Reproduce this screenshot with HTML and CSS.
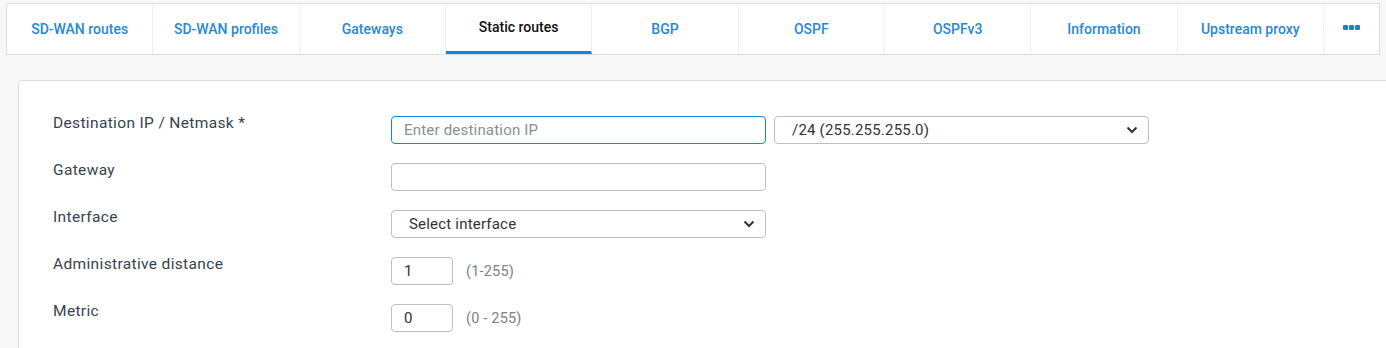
FILE: index.html
```html
<!DOCTYPE html>
<html lang="en">
<head>
    <meta charset="UTF-8">
    <meta name="viewport" content="width=device-width, initial-scale=1.0">
    <title>Static routes</title>
    <link rel="stylesheet" href="styles.css">
</head>
<body>
    <nav class="tab-bar">
        <a class="tab">SD-WAN routes</a>
        <a class="tab">SD-WAN profiles</a>
        <a class="tab">Gateways</a>
        <a class="tab active">Static routes</a>
        <a class="tab">BGP</a>
        <a class="tab">OSPF</a>
        <a class="tab">OSPFv3</a>
        <a class="tab">Information</a>
        <a class="tab">Upstream proxy</a>
        <a class="tab more" title="More"><span></span><span></span><span></span></a>
    </nav>

    <div class="card">
        <div class="form-row">
            <label class="form-label">Destination IP / Netmask *</label>
            <div class="form-fields">
                <input class="text-input focused" type="text" placeholder="Enter destination IP" autofocus>
                <select class="select-input">
                    <option>/24 (255.255.255.0)</option>
                </select>
            </div>
        </div>
        <div class="form-row">
            <label class="form-label">Gateway</label>
            <div class="form-fields">
                <input class="text-input" type="text">
            </div>
        </div>
        <div class="form-row">
            <label class="form-label">Interface</label>
            <div class="form-fields">
                <select class="select-input">
                    <option>Select interface</option>
                </select>
            </div>
        </div>
        <div class="form-row">
            <label class="form-label">Administrative distance</label>
            <div class="form-fields">
                <input class="num-input" type="text" value="1">
                <span class="hint">(1-255)</span>
            </div>
        </div>
        <div class="form-row">
            <label class="form-label">Metric</label>
            <div class="form-fields">
                <input class="num-input" type="text" value="0">
                <span class="hint">(0 - 255)</span>
            </div>
        </div>
    </div>
</body>
</html>
```

FILE: styles.css
```css
* {
    margin: 0;
    padding: 0;
    box-sizing: border-box;
}

body {
    font-family: Roboto, "Liberation Sans", sans-serif;
    background: #f8f8f8;
    color: #37434d;
    height: 348px;
    overflow: hidden;
}

/* tabs */
.tab-bar {
    display: grid;
    grid-template-columns: repeat(9, 1fr) 55px;
    margin: 3px 6px 0 6px;
    height: 52px;
    background: #fff;
    border: 1px solid #dcdcdc;
}

.tab {
    display: flex;
    align-items: center;
    justify-content: center;
    font-size: 14px;
    font-weight: 500;
    color: #2a88d0;
    border-right: 1px solid #f1f1f1;
    cursor: pointer;
}

.tab:last-child {
    border-right: none;
}

.tab.active {
    color: #111;
    border-bottom: 3px solid #1b84cf;
    padding-bottom: 2px;
}

.tab.more {
    gap: 1px;
    padding-bottom: 4px;
}

.tab.more span {
    width: 5px;
    height: 5px;
    border-radius: 1px;
    background: #1b84cf;
}

/* form card */
.card {
    margin: 25px -4px 0 18px;
    background: #fff;
    border: 1px solid #dcdcdc;
    border-radius: 4px 0 0 0;
    padding: 35px 0 16px 34px;
}

.form-row {
    display: flex;
    align-items: flex-start;
    height: 47px;
}

.form-row:last-child {
    height: 28px;
}

.form-label {
    width: 338px;
    margin-top: -2px;
    font-size: 15.5px;
    line-height: 18px;
    letter-spacing: 0.35px;
    color: #37434d;
}

.form-fields {
    display: flex;
    align-items: center;
    gap: 8px;
}

.text-input,
.select-input,
.num-input {
    height: 28px;
    border: 1px solid #b9bec3;
    border-radius: 4px;
    background: #fff;
    font-family: Roboto, "Liberation Sans", sans-serif;
    font-size: 15px;
    letter-spacing: 0.2px;
    color: #333;
    outline: none;
}

.text-input {
    width: 375px;
    padding: 0 12px;
}

.text-input::placeholder {
    color: #8a8f94;
}

.text-input.focused,
.text-input:focus {
    border-color: #1b84cf;
}

.select-input {
    width: 375px;
    padding: 0 30px 0 17px;
    appearance: none;
    -webkit-appearance: none;
    background-image: url("data:image/svg+xml,%3Csvg xmlns='http://www.w3.org/2000/svg' width='12' height='8' viewBox='0 0 12 8'%3E%3Cpath d='M1.5 1.5 6 6l4.5-4.5' fill='none' stroke='%23333' stroke-width='2'/%3E%3C/svg%3E");
    background-repeat: no-repeat;
    background-position: right 10px center;
}

.num-input {
    width: 62px;
    padding: 0 12px;
}

.hint {
    margin-left: 5px;
    font-size: 14.5px;
    letter-spacing: 0.2px;
    color: #7b8289;
}
```
